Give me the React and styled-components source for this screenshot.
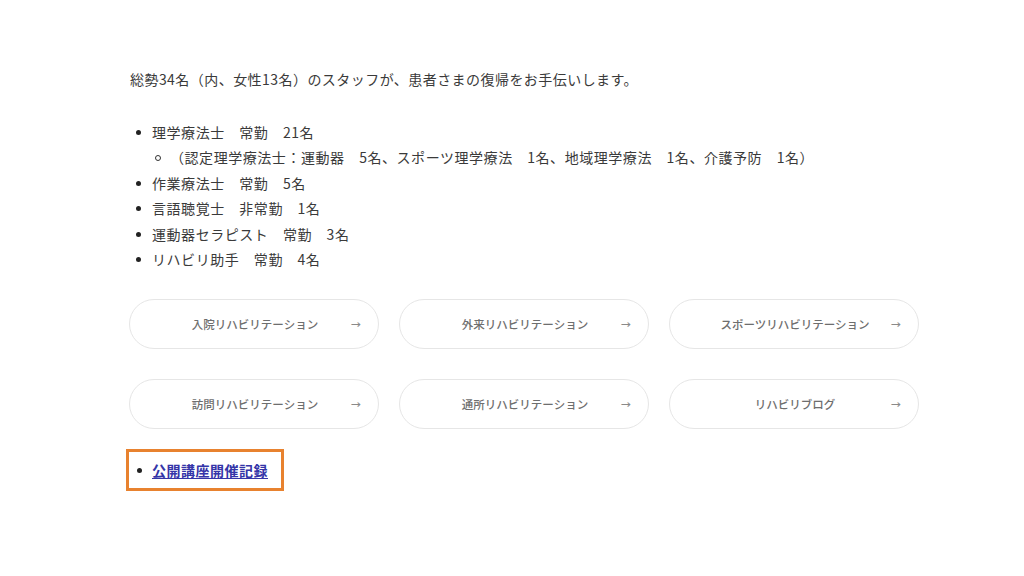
import React from "react";
import styled, { createGlobalStyle } from "styled-components";

const Global = createGlobalStyle`
  html, body { margin: 0; padding: 0; background: #fff; }
  body { font-family: "Noto Sans CJK JP", "Noto Sans", sans-serif; color: #333; }
`;

const Page = styled.main`
  width: 1024px;
  height: 576px;
  box-sizing: border-box;
  padding: 67px 0 0 130px;
`;

const Lead = styled.p`
  margin: 0;
  font-size: 14px;
  line-height: 24px;
  letter-spacing: 0.45px;
  color: #3a3a3a;
`;

const List = styled.ul`
  list-style: none;
  margin: ${(p) => (p.$nested ? "0" : "29px 0 0")};
  padding: 0 0 0 ${(p) => (p.$nested ? "18px" : "22px")};
`;

const Item = styled.li`
  position: relative;
  font-size: 14px;
  line-height: 25.4px;
  letter-spacing: 0.55px;
  color: #3a3a3a;
  white-space: pre;
  &::before {
    content: "";
    position: absolute;
    left: ${(p) => (p.$circle ? "-15px" : "-16px")};
    top: 10px;
    width: ${(p) => (p.$circle ? "4px" : "5px")};
    height: ${(p) => (p.$circle ? "4px" : "5px")};
    border-radius: 50%;
    background: ${(p) => (p.$circle ? "transparent" : "#222")};
    border: ${(p) => (p.$circle ? "1px solid #333" : "none")};
  }
`;

const Grid = styled.nav`
  margin: 27px 0 0 -1px;
  display: grid;
  grid-template-columns: repeat(3, 250px);
  column-gap: 20px;
  row-gap: 30px;
`;

const PillButton = styled.a`
  box-sizing: border-box;
  height: 50px;
  border: 1.5px solid #e6e6e6;
  border-radius: 25px;
  display: grid;
  grid-template-columns: 1fr auto 1fr;
  align-items: center;
  padding: 0 18px 0 20px;
  text-decoration: none;
  color: #6e6e6e;
  font-size: 11.5px;
  font-weight: 500;
  letter-spacing: 0;
  background: #fff;
`;

const PillLabel = styled.span`
  grid-column: 2;
`;

const Arrow = styled.span`
  grid-column: 3;
  justify-self: end;
  font-size: 11px;
  color: #8a8a8a;
  font-family: "DejaVu Sans", sans-serif;
  transform: scaleX(1.1);
`;

const Highlight = styled.ul`
  list-style: none;
  margin: 20px 0 0 -4px;
  padding: 6px 13px 6px 23px;
  display: inline-block;
  border: 3px solid #e8822f;
`;

const LinkItem = styled.li`
  position: relative;
  font-size: 14px;
  line-height: 24px;
  &::before {
    content: "";
    position: absolute;
    left: -15px;
    top: 10px;
    width: 5px;
    height: 5px;
    border-radius: 50%;
    background: #222;
  }
`;

const TextLink = styled.a`
  color: #3535a8;
  font-weight: 700;
  text-decoration: underline;
  text-underline-offset: 2px;
  letter-spacing: 0.5px;
`;

const buttons = [
  "入院リハビリテーション",
  "外来リハビリテーション",
  "スポーツリハビリテーション",
  "訪問リハビリテーション",
  "通所リハビリテーション",
  "リハビリブログ",
];

export default function App() {
  return (
    <>
      <Global />
      <Page>
        <Lead>総勢34名（内、女性13名）のスタッフが、患者さまの復帰をお手伝いします。</Lead>
        <List>
          <Item>
            理学療法士　常勤　21名
            <List $nested>
              <Item $circle>（認定理学療法士：運動器　5名、スポーツ理学療法　1名、地域理学療法　1名、介護予防　1名）</Item>
            </List>
          </Item>
          <Item>作業療法士　常勤　5名</Item>
          <Item>言語聴覚士　非常勤　1名</Item>
          <Item>運動器セラピスト　常勤　3名</Item>
          <Item>リハビリ助手　常勤　4名</Item>
        </List>
        <Grid>
          {buttons.map((b) => (
            <PillButton key={b} href="#">
              <PillLabel>{b}</PillLabel>
              <Arrow>→</Arrow>
            </PillButton>
          ))}
        </Grid>
        <div>
          <Highlight>
            <LinkItem>
              <TextLink href="#">公開講座開催記録</TextLink>
            </LinkItem>
          </Highlight>
        </div>
      </Page>
    </>
  );
}
